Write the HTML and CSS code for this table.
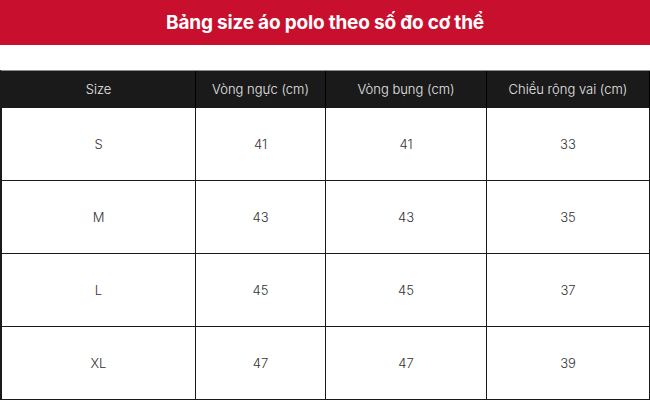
FILE: index.html
```html
<!DOCTYPE html>
<html lang="vi">
<head>
<meta charset="utf-8">
<link rel="stylesheet" href="styles.css">
</head>
<body>
<div class="banner"><h1 class="title">Bảng size áo polo theo số đo cơ thể</h1></div>
<div class="table">
  <div class="cell head">Size</div>
  <div class="cell head">Vòng ngực (cm)</div>
  <div class="cell head">Vòng bụng (cm)</div>
  <div class="cell head">Chiều rộng vai (cm)</div>
  <div class="cell">S</div><div class="cell">41</div><div class="cell">41</div><div class="cell">33</div>
  <div class="cell">M</div><div class="cell">43</div><div class="cell">43</div><div class="cell">35</div>
  <div class="cell">L</div><div class="cell">45</div><div class="cell">45</div><div class="cell">37</div>
  <div class="cell">XL</div><div class="cell">47</div><div class="cell">47</div><div class="cell">39</div>
</div>
</body>
</html>
```
FILE: styles.css
```css
* { box-sizing: border-box; }
html, body { margin: 0; padding: 0; background: #fff; }
body { width: 650px; height: 400px; overflow: hidden; font-family: Inter, "Liberation Sans", sans-serif; }
.banner {
  height: 45px;
  background: #c8102e;
  display: flex;
  align-items: center;
  justify-content: center;
}
.title {
  margin: 0;
  color: #fff;
  font-size: 19px;
  font-weight: 700;
  letter-spacing: -0.2px;
}
.table {
  margin-top: 25px;
  display: grid;
  grid-template-columns: 194px 130px 161px 1fr;
  grid-template-rows: 37px repeat(4, 73px);
  border-top: 1px solid #8a8a8a;
  border-left: 2px solid #1a1a1a;
}
.cell {
  display: flex;
  align-items: center;
  justify-content: center;
  border-right: 1.5px solid #1a1a1a;
  border-bottom: 1.5px solid #1a1a1a;
  font-size: 13px;
  color: #333;
  font-weight: 300;
}
.head {
  background: #1a1a1a;
  color: #e8e8e8;
  font-weight: 300;
  border-right-color: #000;
}
```
